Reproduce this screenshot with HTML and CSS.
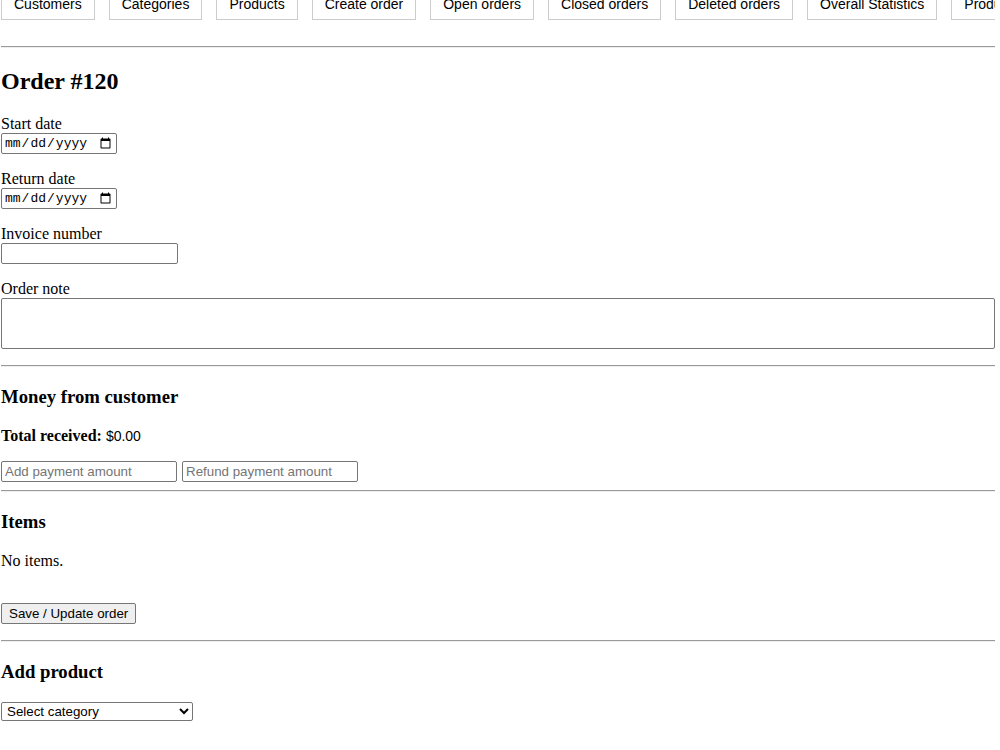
FILE: index.html
```html
<!DOCTYPE html>
<html lang="en">
<head>
<meta charset="utf-8">
<title>Order #120</title>
<link rel="stylesheet" href="styles.css">
</head>
<body>
<nav class="nav">
  <a class="nav-link" href="#">Customers</a>
  <a class="nav-link" href="#">Categories</a>
  <a class="nav-link" href="#">Products</a>
  <a class="nav-link" href="#">Create order</a>
  <a class="nav-link" href="#">Open orders</a>
  <a class="nav-link" href="#">Closed orders</a>
  <a class="nav-link" href="#">Deleted orders</a>
  <a class="nav-link" href="#">Overall Statistics</a>
  <a class="nav-link" href="#">Product Statistics</a>
</nav>
<hr class="rule">
<h2 class="title">Order #120</h2>
<div class="field">
  <label class="field-label" for="start">Start date</label>
  <input class="date-input" id="start" type="date">
</div>
<div class="field">
  <label class="field-label" for="ret">Return date</label>
  <input class="date-input" id="ret" type="date">
</div>
<div class="field">
  <label class="field-label" for="inv">Invoice number</label>
  <input class="text-input" id="inv" type="text">
</div>
<div class="field">
  <label class="field-label" for="note">Order note</label>
  <textarea class="note" id="note"></textarea>
</div>
<hr class="rule">
<h3 class="section-title">Money from customer</h3>
<p class="total"><strong>Total received:</strong> <span class="amount">$0.00</span></p>
<div class="pay-row">
  <input class="text-input" type="text" placeholder="Add payment amount">
  <input class="text-input" type="text" placeholder="Refund payment amount">
</div>
<hr class="rule">
<h3 class="section-title">Items</h3>
<p class="empty">No items.</p>
<div class="actions">
  <button class="save-btn" type="button">Save / Update order</button>
</div>
<hr class="rule">
<h3 class="section-title">Add product</h3>
<select class="category-select">
  <option>Select category</option>
</select>
</body>
</html>
```
FILE: styles.css
```css
html, body {
  background: #fff;
}
body {
  margin: 0;
  padding-left: 1px;
  width: 994px;
  font-family: "Liberation Serif", "Times New Roman", serif;
  font-size: 16px;
  color: #000;
  overflow: hidden;
}
.nav {
  display: flex;
  gap: 14px;
  margin-top: -12px;
  margin-bottom: 26px;
  overflow: hidden;
  white-space: nowrap;
}
.nav-link {
  flex: none;
  padding: 7px 12px;
  border: 1px solid #cccccc;
  font-family: "Liberation Sans", Arial, sans-serif;
  font-size: 14px;
  line-height: 16px;
  color: #000;
  text-decoration: none;
  background: #fff;
}
.rule {
  margin: 8px 0;
  border: 0;
  border-top: 1px solid #9a9a9a;
  border-bottom: 1px solid #eeeeee;
  height: 0;
}
.title {
  font-size: 24px;
  margin: 20px 0;
}
.field {
  margin-bottom: 16px;
}
.field-label {
  display: block;
  line-height: 18px;
}
.date-input {
  display: block;
  box-sizing: border-box;
  width: 116px;
  height: 21px;
  padding: 1px 2px;
  font-family: "Liberation Mono", "DejaVu Sans Mono", monospace;
  font-size: 13px;
  border: 1px solid #767676;
  border-radius: 2px;
  background: #fff;
}
.text-input {
  display: block;
  box-sizing: border-box;
  width: 177px;
  height: 21px;
  padding: 1px 3px;
  font-family: "Liberation Sans", Arial, sans-serif;
  font-size: 13.33px;
  border: 1px solid #767676;
  border-radius: 2px;
  background: #fff;
}
.text-input::placeholder {
  color: #757575;
}
.note {
  display: block;
  box-sizing: border-box;
  width: 994px;
  height: 51px;
  margin: 0;
  border: 1px solid #767676;
  border-radius: 2px;
  resize: none;
}
.section-title {
  font-size: 18.72px;
  margin: 18.72px 0;
}
.total {
  margin: 16px 0;
  padding-top: 1px;
}
.amount {
  font-family: "Liberation Sans", Arial, sans-serif;
  font-size: 14px;
}
.pay-row {
  display: flex;
  gap: 5px;
}
.pay-row .text-input {
  width: 176px;
}
.empty {
  margin: 16px 0;
}
.actions {
  margin-top: 33px;
  margin-bottom: 16px;
}
.save-btn {
  display: block;
  box-sizing: border-box;
  height: 21px;
  padding: 1px 7px;
  font-family: "Liberation Sans", Arial, sans-serif;
  font-size: 13.33px;
  color: #000;
  background: #efefef;
  border: 1px solid #767676;
  border-radius: 2px;
}
.category-select {
  display: block;
  box-sizing: border-box;
  width: 192px;
  height: 19px;
  margin-top: 19px;
  padding: 0 0 0 1px;
  font-family: "Liberation Sans", Arial, sans-serif;
  font-size: 13.33px;
  color: #000;
  background: #fff;
  border: 1px solid #767676;
  border-radius: 2px;
}
```
